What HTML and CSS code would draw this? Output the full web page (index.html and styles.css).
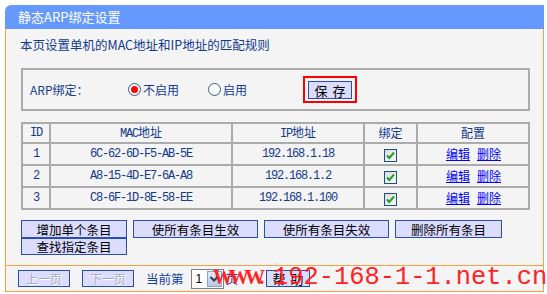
FILE: index.html
```html
<!DOCTYPE html>
<html lang="zh-CN">
<head>
<meta charset="utf-8">
<title>静态ARP绑定设置</title>
<link rel="stylesheet" href="styles.css">
</head>
<body>
<div class="panel">
  <div class="title">静态ARP绑定设置</div>
  <div class="main">
    <p class="intro">本页设置单机的MAC地址和IP地址的匹配规则</p>
    <div class="fieldset">
      <span class="label">ARP绑定：</span>
      <span class="radio r1"><span class="dot on"></span>不启用</span>
      <span class="radio r2"><span class="dot"></span>启用</span>
      <span class="savewrap"><button class="btn save">保 存</button></span>
    </div>
    <table class="grid">
      <colgroup>
        <col class="c1"><col class="c2"><col class="c3"><col class="c4"><col class="c5">
      </colgroup>
      <tr class="head">
        <td class="mono">ID</td><td><span class="mono">MAC</span>地址</td><td><span class="mono">IP</span>地址</td><td>绑定</td><td>配置</td>
      </tr>
      <tr>
        <td class="mono">1</td><td class="mono">6C-62-6D-F5-AB-5E</td><td class="mono">192.168.1.18</td>
        <td><span class="check"><svg viewBox="0 0 11 11" width="11" height="11"><path d="M2 5.5 L4.3 8 L9 2.5" fill="none" stroke="#20a020" stroke-width="2"/></svg></span></td>
        <td><a class="lnk" href="#">编辑</a><a class="lnk" href="#">删除</a></td>
      </tr>
      <tr>
        <td class="mono">2</td><td class="mono">A8-15-4D-E7-6A-A8</td><td class="mono">192.168.1.2</td>
        <td><span class="check"><svg viewBox="0 0 11 11" width="11" height="11"><path d="M2 5.5 L4.3 8 L9 2.5" fill="none" stroke="#20a020" stroke-width="2"/></svg></span></td>
        <td><a class="lnk" href="#">编辑</a><a class="lnk" href="#">删除</a></td>
      </tr>
      <tr>
        <td class="mono">3</td><td class="mono">C8-6F-1D-8E-58-EE</td><td class="mono">192.168.1.100</td>
        <td><span class="check"><svg viewBox="0 0 11 11" width="11" height="11"><path d="M2 5.5 L4.3 8 L9 2.5" fill="none" stroke="#20a020" stroke-width="2"/></svg></span></td>
        <td><a class="lnk" href="#">编辑</a><a class="lnk" href="#">删除</a></td>
      </tr>
    </table>
    <div class="actions">
      <div class="row">
        <button class="btn a1">增加单个条目</button>
        <button class="btn a2">使所有条目生效</button>
        <button class="btn a2">使所有条目失效</button>
        <button class="btn a4">删除所有条目</button>
      </div>
      <div class="row">
        <button class="btn a1">查找指定条目</button>
      </div>
    </div>
  </div>
  <div class="footer">
    <button class="btn page disabled">上一页</button>
    <button class="btn page disabled">下一页</button>
    <span class="cur">当前第</span>
    <span class="select"><span class="val">1</span><span class="arrow"><svg viewBox="0 0 10 8" width="10" height="8"><path d="M1.5 2 L5 5.5 L8.5 2" fill="none" stroke="#2e3e5c" stroke-width="2"/></svg></span></span>
    <span class="cur pg">页</span>
    <button class="btn help">帮 助</button>
  </div>
</div>
<div class="watermark"><span class="www">WWW.</span><span class="dom">192-168-1-1.net.cn</span></div>
</body>
</html>
```

FILE: styles.css
```css
* { box-sizing: border-box; }
html, body { margin: 0; padding: 0; overflow: hidden; }
body {
  width: 547px;
  height: 294px;
  position: relative;
  background: #fff;
  font-family: "Noto Sans CJK SC", "Liberation Sans", sans-serif;
  font-size: 12px;
}
.panel { margin: 5px 0 0 5px; width: 539px; }
.title {
  height: 24px;
  background: #6699ff;
  border-top-left-radius: 6px;
  color: #fff;
  font-size: 13px;
  line-height: 24px;
  padding-left: 13px;
}
.main {
  height: 236px;
  background: #f4f4f4;
  border-left: 1px solid #f9a043;
  border-right: 1px solid #f9a043;
  padding: 8px 0 0 15px;
}
.intro {
  margin: 0 0 0 -1px;
  line-height: 16px;
  font-size: 12.5px;
  color: #123a8f;
}
.fieldset {
  margin-top: 15px;
  width: 509px;
  height: 43px;
  border: 2px solid #ababab;
  display: flex;
  align-items: center;
  padding-left: 7px;
  color: #123a8f;
}
.label { width: 98px; }
.radio { display: flex; align-items: center; gap: 2px; }
.r1 { width: 80px; }
.r2 { width: 95px; }
.dot {
  width: 13px; height: 13px;
  border-radius: 50%;
  border: 1px solid #3c5a7a;
  background: radial-gradient(circle at 40% 40%, #fff 40%, #dde4ec 100%);
  display: flex; align-items: center; justify-content: center;
}
.dot.on::after {
  content: "";
  width: 7px; height: 7px;
  border-radius: 50%;
  background: #f00;
}
.savewrap {
  border: 2px solid #f00;
  width: 54px;
  height: 27px;
  padding: 3px 0 0 3px;
}
.btn {
  background: #dcdcff;
  border: 1px solid #2a4db5;
  font-family: "Noto Sans CJK SC", sans-serif;
  font-size: 12px;
  color: #000;
  padding: 0;
  margin: 0;
  line-height: 15px;
}
.save { width: 44px; height: 18px; font-size: 13px; word-spacing: 2px; }
.grid {
  margin-top: 11px;
  width: 509px;
  table-layout: fixed;
  border-collapse: separate;
  border-spacing: 0;
  border-top: 2px solid #ababab;
  border-left: 2px solid #ababab;
  color: #123a8f;
}
.grid .c1 { width: 28px; }
.grid .c2 { width: 182px; }
.grid .c3 { width: 132px; }
.grid .c4 { width: 53px; }
.grid .c5 { width: 112px; }
.grid td {
  border-right: 2px solid #ababab;
  border-bottom: 2px solid #ababab;
  padding: 0;
  text-align: center;
  height: 22px;
  line-height: 16px;
  white-space: nowrap;
}
.grid .head td { height: 19px; }
.mono {
  font-family: "Liberation Mono", monospace;
  font-size: 12px;
  letter-spacing: -1.2px;
}
.check {
  display: inline-flex;
  width: 13px; height: 13px;
  border: 1px solid #1c5180;
  background: linear-gradient(135deg, #dcdcdc, #fafafa);
  align-items: center; justify-content: center;
  vertical-align: middle;
}
.lnk { color: #0000ff; text-decoration: underline; margin: 0 3px 0 4px; }
.actions { margin-top: 10px; }
.row { display: flex; gap: 6px; }
.actions .btn { height: 18px; font-size: 12.5px; }
.row + .row .btn { height: 17px; }
.a1 { width: 106px; }
.a2 { width: 125px; }
.a4 { width: 107px; }
.footer {
  height: 27px;
  background: #f4f4f4;
  border: 1px solid #f9a043;
  display: flex;
  align-items: center;
  padding-left: 12px;
}
.page { width: 52px; height: 17px; margin-right: 12px; }
.disabled { color: #aab; text-shadow: 1px 1px 0 #fff; }
.cur { color: #1440a0; font-size: 12.5px; margin-right: 7px; }
.select {
  display: flex;
  width: 33px; height: 20px;
  background: #fff;
  border: 1px solid #7f7f7f;
  margin-right: 2px;
}
.val { width: 14px; font-family: "Liberation Sans", sans-serif; font-size: 12px; line-height: 18px; padding-left: 4px; }
.arrow {
  flex: 1;
  margin: 1px;
  background: linear-gradient(#dfe8f6, #b7c8e6);
  border: 1px solid #8aa2cc;
  display: flex; align-items: center; justify-content: center;
}
.pg { margin-right: 28px; }
.help { width: 44px; height: 17px; font-size: 13px; word-spacing: 2px; }
.watermark {
  position: absolute;
  left: 213px;
  top: 264px;
  white-space: nowrap;
  color: #f22;
  line-height: 26px;
}
.www {
  display: inline-block;
  width: 60px;
  font-family: "Liberation Serif", serif;
  font-weight: bold;
  font-size: 20px;
  letter-spacing: -4px;
}
.dom {
  font-family: "Liberation Mono", monospace;
  font-size: 25.4px;
}
```
